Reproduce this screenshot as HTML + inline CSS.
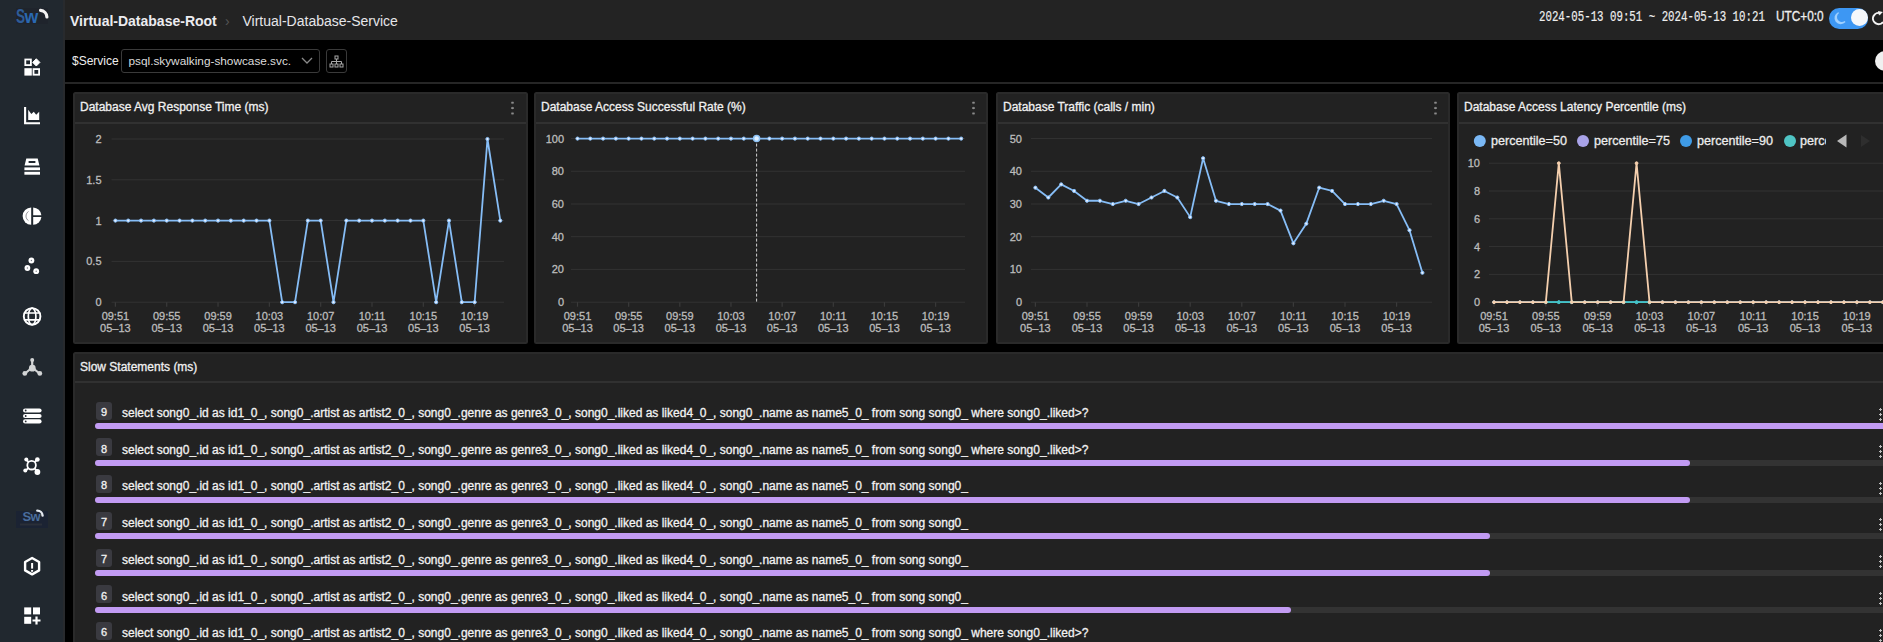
<!DOCTYPE html>
<html><head><meta charset="utf-8">
<style>
*{box-sizing:border-box;margin:0;padding:0}
html,body{width:1883px;height:642px;overflow:hidden;background:#000;font-family:"Liberation Sans",sans-serif;color:#e6e6e6}
.st{-webkit-text-stroke:0.3px currentColor}
.a{position:absolute;white-space:pre}
#side{position:absolute;left:0;top:0;width:65px;height:642px;background:#21282f;border-right:2px solid #282a2d}
#top{position:absolute;left:65px;top:0;width:1818px;height:40px;background:#232323}
#flt{position:absolute;left:65px;top:40px;width:1818px;height:42px;background:#000}
#fline{position:absolute;left:65px;top:82px;width:1818px;height:1.5px;background:#262626}
.panel{position:absolute;background:#222;border:2px solid #2a2a2a;border-radius:2.5px}
.ptitle{position:absolute;left:5px;top:-1px;height:30px;line-height:28px;font-size:12px;color:#f0f0f0;white-space:pre}
.phl{position:absolute;left:0;right:0;top:28px;height:1.6px;background:#313131}
svg.page{position:absolute;left:0;top:0}
svg text{font-family:"Liberation Sans",sans-serif}
.badge{position:absolute;left:96px;width:16px;height:18px;background:#3a3a40;border-radius:3px}
.bnum{position:absolute;left:96px;width:16px;font-size:11px;line-height:13px;text-align:center;color:#f2f2f2;-webkit-text-stroke:0.3px #f2f2f2}
.sq{position:absolute;left:122px;font-size:12px;line-height:14px;color:#f2f2f2;white-space:pre;-webkit-text-stroke:0.3px currentColor}
.trk{position:absolute;left:95px;width:1800px;height:6px;background:#333;border-radius:3px}
.bar{position:absolute;left:95px;height:6px;background:#c29bf3;border-radius:3px}
.kebab{position:absolute;left:1879px;width:3px;height:14px;background:radial-gradient(circle,#bbb 1px,transparent 1.3px) 0 0/3px 5px repeat-y}
.ic{position:absolute;left:0;width:65px}
.kb2{position:absolute;top:100px;width:3px;height:16px;background:radial-gradient(circle,#8c8c8c 1px,transparent 1.4px) 0 0/3px 5.4px repeat-y}
</style></head><body>
<div id="side"></div>
<div id="top"></div>
<div id="flt"></div>
<div id="fline"></div>

<svg class="page" width="65" height="642" viewBox="0 0 65 642" style="position:absolute;left:0;top:0">
<g fill="none" stroke="#fff">
 <!-- logo -->
</g>
<!-- logo top -->
<rect x="16" y="8" width="32" height="16" fill="#1f242c"/>
<text x="0" y="23.3" font-size="20.5" font-weight="bold" fill="#2e5c98" font-family="Liberation Sans" transform="translate(16 0) scale(0.66 1)">S</text>
<text x="0" y="23.3" font-size="19" font-weight="bold" fill="#2a69b2" font-family="Liberation Sans" transform="translate(24.6 0) scale(0.93 1)">w</text>
<path d="M40.6 10.4 A6.8 6.8 0 0 1 46.9 17" stroke="#f4f4f4" stroke-width="3.2" fill="none" stroke-linecap="round"/>
<!-- icon1 grid -->
<rect x="25.3" y="59.5" width="5.6" height="5.6" fill="none" stroke="#fff" stroke-width="1.8"/>
<path d="M36.3 58.8 L39.9 62.4 L36.3 66 L32.7 62.4 Z" fill="#fff" stroke="#fff" stroke-width="1" stroke-linejoin="round"/>
<rect x="24.4" y="68.2" width="7.4" height="7.4" fill="#fff"/>
<rect x="33.5" y="69.1" width="5.6" height="5.6" fill="none" stroke="#fff" stroke-width="1.8"/>
<!-- icon2 area chart -->
<path d="M25.1 107 V123.2 H40" fill="none" stroke="#fff" stroke-width="2.1"/>
<path d="M28.2 109.8 L31.3 114 L33.8 111.8 L36.2 114.8 L39.2 111.8 V120 H28.2 Z" fill="#fff"/>
<!-- icon3 database -->
<path d="M26.3 158.4 H37.7 L39.4 165.6 H24.6 Z M28.6 161 H35.4 V163 H28.6 Z" fill="#fff" fill-rule="evenodd"/>
<rect x="24.4" y="167.4" width="15.6" height="2.8" fill="#fff"/>
<rect x="24.4" y="171.8" width="15.6" height="2.9" fill="#fff"/>
<!-- icon4 pie -->
<path d="M31.2 207.5 A8.6 8.6 0 0 0 31.2 224.7 Z" fill="#fff"/>
<path d="M33.2 207.5 A8.6 8.6 0 0 1 41.4 215.3 H33.2 Z" fill="#fff"/>
<path d="M33.2 217 H41.4 A8.6 8.6 0 0 1 33.2 224.7 Z" fill="#fff"/>
<path d="M28.5 211.5 A5.5 5.5 0 0 0 28.5 220.7" stroke="#252a33" stroke-width="1" fill="none" opacity="0.5"/>
<!-- icon5 dots -->
<circle cx="31.4" cy="260.5" r="2.9" fill="#fff"/><circle cx="31.4" cy="260.5" r="0.7" fill="#7a7f88"/>
<circle cx="27.4" cy="268" r="2.9" fill="#fff"/><circle cx="27.4" cy="268" r="0.7" fill="#7a7f88"/>
<circle cx="36.2" cy="271.2" r="2.9" fill="#fff"/><circle cx="36.2" cy="271.2" r="0.7" fill="#7a7f88"/>
<!-- icon6 globe -->
<circle cx="32.1" cy="316.4" r="8.3" fill="none" stroke="#fff" stroke-width="1.9"/>
<ellipse cx="32.1" cy="316.4" rx="3.8" ry="8.3" fill="none" stroke="#fff" stroke-width="1.7"/>
<path d="M24 313 H40.2 M24 319.8 H40.2" stroke="#fff" stroke-width="1.7"/>
<!-- icon7 tri node -->
<g opacity="0.8">
<path d="M32.2 360 V367.5 M32.2 367.5 L25 373.5 M32.2 367.5 L39.5 373.5" stroke="#fff" stroke-width="2.2" fill="none"/>
<circle cx="32.2" cy="360" r="2" fill="#fff"/>
<circle cx="32.3" cy="368.2" r="3.4" fill="#fff"/>
<circle cx="24.8" cy="373.4" r="2.4" fill="#fff"/>
<circle cx="39.8" cy="373.4" r="2.4" fill="#fff"/>
</g>
<!-- icon8 list -->
<rect x="23" y="408.4" width="18.6" height="4.2" rx="2.1" fill="#fff"/>
<rect x="23" y="413.9" width="18.6" height="4.2" rx="2.1" fill="#fff"/>
<rect x="23" y="419.3" width="18.6" height="4.2" rx="2.1" fill="#fff"/>
<circle cx="25.7" cy="410.5" r="0.9" fill="#252a33"/><circle cx="25.7" cy="416" r="0.9" fill="#252a33"/><circle cx="25.7" cy="421.4" r="0.9" fill="#252a33"/>
<!-- icon9 network -->
<circle cx="31.6" cy="465.2" r="4.3" fill="none" stroke="#fff" stroke-width="1.8"/>
<path d="M26.3 459.7 L28.6 462.2 M37.2 459.5 L34.7 462.2 M25.6 470.6 L28.4 468 M37.3 471.5 L34.6 468.3" stroke="#fff" stroke-width="1.9"/>
<circle cx="26.3" cy="459.6" r="2" fill="#fff"/>
<circle cx="37.4" cy="459.5" r="2.3" fill="#fff"/>
<circle cx="25.3" cy="470.6" r="2" fill="#fff"/>
<circle cx="37.4" cy="472" r="2.9" fill="#fff"/>
<!-- icon10 sw -->
<rect x="16" y="511" width="32" height="17" fill="#1b2333"/>
<text x="22.5" y="521" font-size="13" font-weight="bold" fill="#4a6d9c" font-family="Liberation Sans" letter-spacing="-0.6">Sw</text>
<path d="M37.3 510.6 A5.2 5.2 0 0 1 42.6 515.6" stroke="#e4e9ef" stroke-width="2.4" fill="none" stroke-linecap="round"/>
<rect x="20" y="523.5" width="22" height="2" fill="#2a2f38"/>
<!-- icon11 hexagon -->
<path d="M32.1 558 L39.1 562 V570.4 L32.1 574.4 L25.1 570.4 V562 Z" fill="none" stroke="#fff" stroke-width="2.4" stroke-linejoin="round"/>
<rect x="31.1" y="563" width="2" height="5.6" fill="#fff"/>
<rect x="31.1" y="570" width="2" height="1.8" fill="#fff"/>
<!-- icon12 grid plus -->
<rect x="24.2" y="607.4" width="7" height="7" fill="#fff"/>
<rect x="33" y="607.4" width="7" height="7" fill="#fff"/>
<rect x="24.2" y="616.8" width="7" height="7" fill="#fff"/>
<path d="M36.5 616.5 V624.5 M32.5 620.5 H40.5" stroke="#fff" stroke-width="2.2"/>
</svg>


<!-- header -->
<div class="a" style="left:70px;top:13px;font-size:14px;font-weight:bold;color:#ececf0;line-height:16px">Virtual-Database-Root</div>
<div class="a" style="left:225px;top:13px;font-size:14px;color:#555;line-height:16px">&#8250;</div>
<div class="a" style="left:242.5px;top:13px;font-size:14px;color:#e6e6ea;line-height:16px">Virtual-Database-Service</div>

<!-- time -->
<div class="a" style="left:1539px;top:8.5px;font-family:'Liberation Mono',monospace;font-size:15px;line-height:17px;-webkit-text-stroke:0.2px #eee;color:#eee;transform:scaleX(0.717);transform-origin:0 0">2024-05-13 09:51 ~ 2024-05-13 10:21</div>
<div class="a" style="left:1776px;top:8px;font-size:14px;line-height:16px;color:#eee;-webkit-text-stroke:0.3px #eee;transform:scaleX(0.845);transform-origin:0 0">UTC+0:0</div>
<div class="a" style="left:1829px;top:8px;width:39px;height:20.5px;border-radius:10.25px;background:#3d97f3"></div>
<div class="a" style="left:1851px;top:9.4px;width:17px;height:17px;border-radius:8.5px;background:#f6f8fb"></div>
<svg class="page" width="1883" height="40" style="position:absolute;left:0;top:0">
<path d="M1838.5 12.8 A5.6 5.6 0 1 0 1845 21.6 A4.6 4.6 0 0 1 1838.5 12.8 Z" fill="none" stroke="#9fd0ff" stroke-width="1.4"/>
<path d="M1881 13.5 A5.6 5.6 0 1 0 1883 22" fill="none" stroke="#f4f4f4" stroke-width="2"/>
<path d="M1878 11 L1883 12 L1879 15.5 Z" fill="#f4f4f4"/>
</svg>

<!-- filter -->
<div class="a" style="left:72px;top:53px;font-size:12px;color:#eee;line-height:16px">$Service</div>
<div class="a" style="left:121px;top:49px;width:199px;height:24px;border:1px solid #3a3a3a;border-radius:3px"></div>
<div class="a" style="left:128.5px;top:53px;font-size:11.8px;color:#ddd;line-height:16px">psql.skywalking-showcase.svc.</div>
<div class="a" style="left:326px;top:49px;width:21px;height:24px;border:1px solid #3a3a3a;border-radius:3px"></div>
<svg class="page" width="400" height="90" style="position:absolute;left:0;top:0">
<path d="M302 58 L307 63 L312 58" fill="none" stroke="#8a8a8a" stroke-width="1.3"/>
<g fill="none" stroke="#a8a8a8" stroke-width="1">
<rect x="335" y="56" width="3" height="3"/>
<path d="M336.5 59 V61.5 M331.5 64 V61.5 H341.5 V64 M336.5 61.5 V64"/>
<rect x="330" y="64" width="3" height="3"/><rect x="335" y="64" width="3" height="3"/><rect x="340" y="64" width="3" height="3"/>
</g>
</svg>
<div class="a" style="left:1875px;top:51px;width:20px;height:20px;border-radius:10px;background:#f0f0f0"></div>

<!-- panels -->
<div class="panel" style="left:73px;top:92px;width:455px;height:252px"><div class="ptitle st">Database Avg Response Time (ms)</div><div class="phl"></div></div>
<div class="panel" style="left:534px;top:92px;width:454px;height:252px"><div class="ptitle st">Database Access Successful Rate (%)</div><div class="phl"></div></div>
<div class="panel" style="left:996px;top:92px;width:454px;height:252px"><div class="ptitle st">Database Traffic (calls / min)</div><div class="phl"></div></div>
<div class="panel" style="left:1457px;top:92px;width:440px;height:252px"><div class="ptitle st">Database Access Latency Percentile (ms)</div><div class="phl"></div></div>
<div class="panel" style="left:73px;top:352px;width:1830px;height:300px"><div class="ptitle st">Slow Statements (ms)</div><div class="phl" style="top:27px"></div></div>

<svg class="page" width="1883" height="642" viewBox="0 0 1883 642">
<line x1="111.5" y1="139" x2="504" y2="139" stroke="#333" stroke-width="1"/>
<line x1="111.5" y1="179.8" x2="504" y2="179.8" stroke="#333" stroke-width="1"/>
<line x1="111.5" y1="220.6" x2="504" y2="220.6" stroke="#333" stroke-width="1"/>
<line x1="111.5" y1="261.4" x2="504" y2="261.4" stroke="#333" stroke-width="1"/>
<line x1="111.5" y1="302.2" x2="504" y2="302.2" stroke="#333" stroke-width="1"/>
<text x="101.5" y="142.9" font-size="11" fill="#bcbcbc" stroke="#bcbcbc" stroke-width="0.3" text-anchor="end" font-weight="normal" >2</text>
<text x="101.5" y="183.7" font-size="11" fill="#bcbcbc" stroke="#bcbcbc" stroke-width="0.3" text-anchor="end" font-weight="normal" >1.5</text>
<text x="101.5" y="224.5" font-size="11" fill="#bcbcbc" stroke="#bcbcbc" stroke-width="0.3" text-anchor="end" font-weight="normal" >1</text>
<text x="101.5" y="265.3" font-size="11" fill="#bcbcbc" stroke="#bcbcbc" stroke-width="0.3" text-anchor="end" font-weight="normal" >0.5</text>
<text x="101.5" y="306.1" font-size="11" fill="#bcbcbc" stroke="#bcbcbc" stroke-width="0.3" text-anchor="end" font-weight="normal" >0</text>
<line x1="115.4" y1="302.2" x2="115.4" y2="306.7" stroke="#3a3a3a" stroke-width="1.2"/>
<text x="115.4" y="320.4" font-size="11" fill="#bcbcbc" stroke="#bcbcbc" stroke-width="0.3" text-anchor="middle" font-weight="normal" >09:51</text>
<text x="115.4" y="331.7" font-size="11" fill="#bcbcbc" stroke="#bcbcbc" stroke-width="0.3" text-anchor="middle" font-weight="normal" >05–13</text>
<line x1="166.72" y1="302.2" x2="166.72" y2="306.7" stroke="#3a3a3a" stroke-width="1.2"/>
<text x="166.72" y="320.4" font-size="11" fill="#bcbcbc" stroke="#bcbcbc" stroke-width="0.3" text-anchor="middle" font-weight="normal" >09:55</text>
<text x="166.72" y="331.7" font-size="11" fill="#bcbcbc" stroke="#bcbcbc" stroke-width="0.3" text-anchor="middle" font-weight="normal" >05–13</text>
<line x1="218.04" y1="302.2" x2="218.04" y2="306.7" stroke="#3a3a3a" stroke-width="1.2"/>
<text x="218.04" y="320.4" font-size="11" fill="#bcbcbc" stroke="#bcbcbc" stroke-width="0.3" text-anchor="middle" font-weight="normal" >09:59</text>
<text x="218.04" y="331.7" font-size="11" fill="#bcbcbc" stroke="#bcbcbc" stroke-width="0.3" text-anchor="middle" font-weight="normal" >05–13</text>
<line x1="269.36" y1="302.2" x2="269.36" y2="306.7" stroke="#3a3a3a" stroke-width="1.2"/>
<text x="269.36" y="320.4" font-size="11" fill="#bcbcbc" stroke="#bcbcbc" stroke-width="0.3" text-anchor="middle" font-weight="normal" >10:03</text>
<text x="269.36" y="331.7" font-size="11" fill="#bcbcbc" stroke="#bcbcbc" stroke-width="0.3" text-anchor="middle" font-weight="normal" >05–13</text>
<line x1="320.68" y1="302.2" x2="320.68" y2="306.7" stroke="#3a3a3a" stroke-width="1.2"/>
<text x="320.68" y="320.4" font-size="11" fill="#bcbcbc" stroke="#bcbcbc" stroke-width="0.3" text-anchor="middle" font-weight="normal" >10:07</text>
<text x="320.68" y="331.7" font-size="11" fill="#bcbcbc" stroke="#bcbcbc" stroke-width="0.3" text-anchor="middle" font-weight="normal" >05–13</text>
<line x1="372" y1="302.2" x2="372" y2="306.7" stroke="#3a3a3a" stroke-width="1.2"/>
<text x="372" y="320.4" font-size="11" fill="#bcbcbc" stroke="#bcbcbc" stroke-width="0.3" text-anchor="middle" font-weight="normal" >10:11</text>
<text x="372" y="331.7" font-size="11" fill="#bcbcbc" stroke="#bcbcbc" stroke-width="0.3" text-anchor="middle" font-weight="normal" >05–13</text>
<line x1="423.32" y1="302.2" x2="423.32" y2="306.7" stroke="#3a3a3a" stroke-width="1.2"/>
<text x="423.32" y="320.4" font-size="11" fill="#bcbcbc" stroke="#bcbcbc" stroke-width="0.3" text-anchor="middle" font-weight="normal" >10:15</text>
<text x="423.32" y="331.7" font-size="11" fill="#bcbcbc" stroke="#bcbcbc" stroke-width="0.3" text-anchor="middle" font-weight="normal" >05–13</text>
<line x1="474.64" y1="302.2" x2="474.64" y2="306.7" stroke="#3a3a3a" stroke-width="1.2"/>
<text x="474.64" y="320.4" font-size="11" fill="#bcbcbc" stroke="#bcbcbc" stroke-width="0.3" text-anchor="middle" font-weight="normal" >10:19</text>
<text x="474.64" y="331.7" font-size="11" fill="#bcbcbc" stroke="#bcbcbc" stroke-width="0.3" text-anchor="middle" font-weight="normal" >05–13</text>
<polyline points="115.4,220.6 128.23,220.6 141.06,220.6 153.89,220.6 166.72,220.6 179.55,220.6 192.38,220.6 205.21,220.6 218.04,220.6 230.87,220.6 243.7,220.6 256.53,220.6 269.36,220.6 282.19,302.2 295.02,302.2 307.85,220.6 320.68,220.6 333.51,302.2 346.34,220.6 359.17,220.6 372,220.6 384.83,220.6 397.66,220.6 410.49,220.6 423.32,220.6 436.15,302.2 448.98,220.6 461.81,302.2 474.64,302.2 487.47,139 500.3,220.6" fill="none" stroke="#86bdf6" stroke-width="1.8" stroke-linejoin="round"/>
<circle cx="115.4" cy="220.6" r="1.6" fill="#e8f0ff" stroke="#86bdf6" stroke-width="1"/>
<circle cx="128.23" cy="220.6" r="1.6" fill="#e8f0ff" stroke="#86bdf6" stroke-width="1"/>
<circle cx="141.06" cy="220.6" r="1.6" fill="#e8f0ff" stroke="#86bdf6" stroke-width="1"/>
<circle cx="153.89" cy="220.6" r="1.6" fill="#e8f0ff" stroke="#86bdf6" stroke-width="1"/>
<circle cx="166.72" cy="220.6" r="1.6" fill="#e8f0ff" stroke="#86bdf6" stroke-width="1"/>
<circle cx="179.55" cy="220.6" r="1.6" fill="#e8f0ff" stroke="#86bdf6" stroke-width="1"/>
<circle cx="192.38" cy="220.6" r="1.6" fill="#e8f0ff" stroke="#86bdf6" stroke-width="1"/>
<circle cx="205.21" cy="220.6" r="1.6" fill="#e8f0ff" stroke="#86bdf6" stroke-width="1"/>
<circle cx="218.04" cy="220.6" r="1.6" fill="#e8f0ff" stroke="#86bdf6" stroke-width="1"/>
<circle cx="230.87" cy="220.6" r="1.6" fill="#e8f0ff" stroke="#86bdf6" stroke-width="1"/>
<circle cx="243.7" cy="220.6" r="1.6" fill="#e8f0ff" stroke="#86bdf6" stroke-width="1"/>
<circle cx="256.53" cy="220.6" r="1.6" fill="#e8f0ff" stroke="#86bdf6" stroke-width="1"/>
<circle cx="269.36" cy="220.6" r="1.6" fill="#e8f0ff" stroke="#86bdf6" stroke-width="1"/>
<circle cx="282.19" cy="302.2" r="1.6" fill="#e8f0ff" stroke="#86bdf6" stroke-width="1"/>
<circle cx="295.02" cy="302.2" r="1.6" fill="#e8f0ff" stroke="#86bdf6" stroke-width="1"/>
<circle cx="307.85" cy="220.6" r="1.6" fill="#e8f0ff" stroke="#86bdf6" stroke-width="1"/>
<circle cx="320.68" cy="220.6" r="1.6" fill="#e8f0ff" stroke="#86bdf6" stroke-width="1"/>
<circle cx="333.51" cy="302.2" r="1.6" fill="#e8f0ff" stroke="#86bdf6" stroke-width="1"/>
<circle cx="346.34" cy="220.6" r="1.6" fill="#e8f0ff" stroke="#86bdf6" stroke-width="1"/>
<circle cx="359.17" cy="220.6" r="1.6" fill="#e8f0ff" stroke="#86bdf6" stroke-width="1"/>
<circle cx="372" cy="220.6" r="1.6" fill="#e8f0ff" stroke="#86bdf6" stroke-width="1"/>
<circle cx="384.83" cy="220.6" r="1.6" fill="#e8f0ff" stroke="#86bdf6" stroke-width="1"/>
<circle cx="397.66" cy="220.6" r="1.6" fill="#e8f0ff" stroke="#86bdf6" stroke-width="1"/>
<circle cx="410.49" cy="220.6" r="1.6" fill="#e8f0ff" stroke="#86bdf6" stroke-width="1"/>
<circle cx="423.32" cy="220.6" r="1.6" fill="#e8f0ff" stroke="#86bdf6" stroke-width="1"/>
<circle cx="436.15" cy="302.2" r="1.6" fill="#e8f0ff" stroke="#86bdf6" stroke-width="1"/>
<circle cx="448.98" cy="220.6" r="1.6" fill="#e8f0ff" stroke="#86bdf6" stroke-width="1"/>
<circle cx="461.81" cy="302.2" r="1.6" fill="#e8f0ff" stroke="#86bdf6" stroke-width="1"/>
<circle cx="474.64" cy="302.2" r="1.6" fill="#e8f0ff" stroke="#86bdf6" stroke-width="1"/>
<circle cx="487.47" cy="139" r="1.6" fill="#e8f0ff" stroke="#86bdf6" stroke-width="1"/>
<circle cx="500.3" cy="220.6" r="1.6" fill="#e8f0ff" stroke="#86bdf6" stroke-width="1"/>
<line x1="571" y1="138.6" x2="965" y2="138.6" stroke="#333" stroke-width="1"/>
<line x1="571" y1="171.3" x2="965" y2="171.3" stroke="#333" stroke-width="1"/>
<line x1="571" y1="204" x2="965" y2="204" stroke="#333" stroke-width="1"/>
<line x1="571" y1="236.7" x2="965" y2="236.7" stroke="#333" stroke-width="1"/>
<line x1="571" y1="269.4" x2="965" y2="269.4" stroke="#333" stroke-width="1"/>
<line x1="571" y1="302.2" x2="965" y2="302.2" stroke="#333" stroke-width="1"/>
<text x="564" y="142.5" font-size="11" fill="#bcbcbc" stroke="#bcbcbc" stroke-width="0.3" text-anchor="end" font-weight="normal" >100</text>
<text x="564" y="175.2" font-size="11" fill="#bcbcbc" stroke="#bcbcbc" stroke-width="0.3" text-anchor="end" font-weight="normal" >80</text>
<text x="564" y="207.9" font-size="11" fill="#bcbcbc" stroke="#bcbcbc" stroke-width="0.3" text-anchor="end" font-weight="normal" >60</text>
<text x="564" y="240.6" font-size="11" fill="#bcbcbc" stroke="#bcbcbc" stroke-width="0.3" text-anchor="end" font-weight="normal" >40</text>
<text x="564" y="273.3" font-size="11" fill="#bcbcbc" stroke="#bcbcbc" stroke-width="0.3" text-anchor="end" font-weight="normal" >20</text>
<text x="564" y="306.1" font-size="11" fill="#bcbcbc" stroke="#bcbcbc" stroke-width="0.3" text-anchor="end" font-weight="normal" >0</text>
<line x1="577.5" y1="302.2" x2="577.5" y2="306.7" stroke="#3a3a3a" stroke-width="1.2"/>
<text x="577.5" y="320.4" font-size="11" fill="#bcbcbc" stroke="#bcbcbc" stroke-width="0.3" text-anchor="middle" font-weight="normal" >09:51</text>
<text x="577.5" y="331.7" font-size="11" fill="#bcbcbc" stroke="#bcbcbc" stroke-width="0.3" text-anchor="middle" font-weight="normal" >05–13</text>
<line x1="628.66" y1="302.2" x2="628.66" y2="306.7" stroke="#3a3a3a" stroke-width="1.2"/>
<text x="628.66" y="320.4" font-size="11" fill="#bcbcbc" stroke="#bcbcbc" stroke-width="0.3" text-anchor="middle" font-weight="normal" >09:55</text>
<text x="628.66" y="331.7" font-size="11" fill="#bcbcbc" stroke="#bcbcbc" stroke-width="0.3" text-anchor="middle" font-weight="normal" >05–13</text>
<line x1="679.82" y1="302.2" x2="679.82" y2="306.7" stroke="#3a3a3a" stroke-width="1.2"/>
<text x="679.82" y="320.4" font-size="11" fill="#bcbcbc" stroke="#bcbcbc" stroke-width="0.3" text-anchor="middle" font-weight="normal" >09:59</text>
<text x="679.82" y="331.7" font-size="11" fill="#bcbcbc" stroke="#bcbcbc" stroke-width="0.3" text-anchor="middle" font-weight="normal" >05–13</text>
<line x1="730.98" y1="302.2" x2="730.98" y2="306.7" stroke="#3a3a3a" stroke-width="1.2"/>
<text x="730.98" y="320.4" font-size="11" fill="#bcbcbc" stroke="#bcbcbc" stroke-width="0.3" text-anchor="middle" font-weight="normal" >10:03</text>
<text x="730.98" y="331.7" font-size="11" fill="#bcbcbc" stroke="#bcbcbc" stroke-width="0.3" text-anchor="middle" font-weight="normal" >05–13</text>
<line x1="782.14" y1="302.2" x2="782.14" y2="306.7" stroke="#3a3a3a" stroke-width="1.2"/>
<text x="782.14" y="320.4" font-size="11" fill="#bcbcbc" stroke="#bcbcbc" stroke-width="0.3" text-anchor="middle" font-weight="normal" >10:07</text>
<text x="782.14" y="331.7" font-size="11" fill="#bcbcbc" stroke="#bcbcbc" stroke-width="0.3" text-anchor="middle" font-weight="normal" >05–13</text>
<line x1="833.3" y1="302.2" x2="833.3" y2="306.7" stroke="#3a3a3a" stroke-width="1.2"/>
<text x="833.3" y="320.4" font-size="11" fill="#bcbcbc" stroke="#bcbcbc" stroke-width="0.3" text-anchor="middle" font-weight="normal" >10:11</text>
<text x="833.3" y="331.7" font-size="11" fill="#bcbcbc" stroke="#bcbcbc" stroke-width="0.3" text-anchor="middle" font-weight="normal" >05–13</text>
<line x1="884.46" y1="302.2" x2="884.46" y2="306.7" stroke="#3a3a3a" stroke-width="1.2"/>
<text x="884.46" y="320.4" font-size="11" fill="#bcbcbc" stroke="#bcbcbc" stroke-width="0.3" text-anchor="middle" font-weight="normal" >10:15</text>
<text x="884.46" y="331.7" font-size="11" fill="#bcbcbc" stroke="#bcbcbc" stroke-width="0.3" text-anchor="middle" font-weight="normal" >05–13</text>
<line x1="935.62" y1="302.2" x2="935.62" y2="306.7" stroke="#3a3a3a" stroke-width="1.2"/>
<text x="935.62" y="320.4" font-size="11" fill="#bcbcbc" stroke="#bcbcbc" stroke-width="0.3" text-anchor="middle" font-weight="normal" >10:19</text>
<text x="935.62" y="331.7" font-size="11" fill="#bcbcbc" stroke="#bcbcbc" stroke-width="0.3" text-anchor="middle" font-weight="normal" >05–13</text>
<polyline points="577.5,138.6 590.29,138.6 603.08,138.6 615.87,138.6 628.66,138.6 641.45,138.6 654.24,138.6 667.03,138.6 679.82,138.6 692.61,138.6 705.4,138.6 718.19,138.6 730.98,138.6 743.77,138.6 756.56,138.6 769.35,138.6 782.14,138.6 794.93,138.6 807.72,138.6 820.51,138.6 833.3,138.6 846.09,138.6 858.88,138.6 871.67,138.6 884.46,138.6 897.25,138.6 910.04,138.6 922.83,138.6 935.62,138.6 948.41,138.6 961.2,138.6" fill="none" stroke="#86bdf6" stroke-width="1.8" stroke-linejoin="round"/>
<circle cx="577.5" cy="138.6" r="1.6" fill="#e8f0ff" stroke="#86bdf6" stroke-width="1"/>
<circle cx="590.29" cy="138.6" r="1.6" fill="#e8f0ff" stroke="#86bdf6" stroke-width="1"/>
<circle cx="603.08" cy="138.6" r="1.6" fill="#e8f0ff" stroke="#86bdf6" stroke-width="1"/>
<circle cx="615.87" cy="138.6" r="1.6" fill="#e8f0ff" stroke="#86bdf6" stroke-width="1"/>
<circle cx="628.66" cy="138.6" r="1.6" fill="#e8f0ff" stroke="#86bdf6" stroke-width="1"/>
<circle cx="641.45" cy="138.6" r="1.6" fill="#e8f0ff" stroke="#86bdf6" stroke-width="1"/>
<circle cx="654.24" cy="138.6" r="1.6" fill="#e8f0ff" stroke="#86bdf6" stroke-width="1"/>
<circle cx="667.03" cy="138.6" r="1.6" fill="#e8f0ff" stroke="#86bdf6" stroke-width="1"/>
<circle cx="679.82" cy="138.6" r="1.6" fill="#e8f0ff" stroke="#86bdf6" stroke-width="1"/>
<circle cx="692.61" cy="138.6" r="1.6" fill="#e8f0ff" stroke="#86bdf6" stroke-width="1"/>
<circle cx="705.4" cy="138.6" r="1.6" fill="#e8f0ff" stroke="#86bdf6" stroke-width="1"/>
<circle cx="718.19" cy="138.6" r="1.6" fill="#e8f0ff" stroke="#86bdf6" stroke-width="1"/>
<circle cx="730.98" cy="138.6" r="1.6" fill="#e8f0ff" stroke="#86bdf6" stroke-width="1"/>
<circle cx="743.77" cy="138.6" r="1.6" fill="#e8f0ff" stroke="#86bdf6" stroke-width="1"/>
<circle cx="756.56" cy="138.6" r="1.6" fill="#e8f0ff" stroke="#86bdf6" stroke-width="1"/>
<circle cx="769.35" cy="138.6" r="1.6" fill="#e8f0ff" stroke="#86bdf6" stroke-width="1"/>
<circle cx="782.14" cy="138.6" r="1.6" fill="#e8f0ff" stroke="#86bdf6" stroke-width="1"/>
<circle cx="794.93" cy="138.6" r="1.6" fill="#e8f0ff" stroke="#86bdf6" stroke-width="1"/>
<circle cx="807.72" cy="138.6" r="1.6" fill="#e8f0ff" stroke="#86bdf6" stroke-width="1"/>
<circle cx="820.51" cy="138.6" r="1.6" fill="#e8f0ff" stroke="#86bdf6" stroke-width="1"/>
<circle cx="833.3" cy="138.6" r="1.6" fill="#e8f0ff" stroke="#86bdf6" stroke-width="1"/>
<circle cx="846.09" cy="138.6" r="1.6" fill="#e8f0ff" stroke="#86bdf6" stroke-width="1"/>
<circle cx="858.88" cy="138.6" r="1.6" fill="#e8f0ff" stroke="#86bdf6" stroke-width="1"/>
<circle cx="871.67" cy="138.6" r="1.6" fill="#e8f0ff" stroke="#86bdf6" stroke-width="1"/>
<circle cx="884.46" cy="138.6" r="1.6" fill="#e8f0ff" stroke="#86bdf6" stroke-width="1"/>
<circle cx="897.25" cy="138.6" r="1.6" fill="#e8f0ff" stroke="#86bdf6" stroke-width="1"/>
<circle cx="910.04" cy="138.6" r="1.6" fill="#e8f0ff" stroke="#86bdf6" stroke-width="1"/>
<circle cx="922.83" cy="138.6" r="1.6" fill="#e8f0ff" stroke="#86bdf6" stroke-width="1"/>
<circle cx="935.62" cy="138.6" r="1.6" fill="#e8f0ff" stroke="#86bdf6" stroke-width="1"/>
<circle cx="948.41" cy="138.6" r="1.6" fill="#e8f0ff" stroke="#86bdf6" stroke-width="1"/>
<circle cx="961.2" cy="138.6" r="1.6" fill="#e8f0ff" stroke="#86bdf6" stroke-width="1"/>
<line x1="756.6" y1="138.6" x2="756.6" y2="302.2" stroke="#cfcfcf" stroke-width="1" stroke-dasharray="3,2"/>
<circle cx="756.6" cy="138.6" r="3" fill="#dfefff" stroke="#8ec3f5" stroke-width="1.5"/>
<line x1="1031" y1="138.6" x2="1432" y2="138.6" stroke="#333" stroke-width="1"/>
<line x1="1031" y1="171.3" x2="1432" y2="171.3" stroke="#333" stroke-width="1"/>
<line x1="1031" y1="204" x2="1432" y2="204" stroke="#333" stroke-width="1"/>
<line x1="1031" y1="236.7" x2="1432" y2="236.7" stroke="#333" stroke-width="1"/>
<line x1="1031" y1="269.4" x2="1432" y2="269.4" stroke="#333" stroke-width="1"/>
<line x1="1031" y1="302.2" x2="1432" y2="302.2" stroke="#333" stroke-width="1"/>
<text x="1022" y="142.5" font-size="11" fill="#bcbcbc" stroke="#bcbcbc" stroke-width="0.3" text-anchor="end" font-weight="normal" >50</text>
<text x="1022" y="175.2" font-size="11" fill="#bcbcbc" stroke="#bcbcbc" stroke-width="0.3" text-anchor="end" font-weight="normal" >40</text>
<text x="1022" y="207.9" font-size="11" fill="#bcbcbc" stroke="#bcbcbc" stroke-width="0.3" text-anchor="end" font-weight="normal" >30</text>
<text x="1022" y="240.6" font-size="11" fill="#bcbcbc" stroke="#bcbcbc" stroke-width="0.3" text-anchor="end" font-weight="normal" >20</text>
<text x="1022" y="273.3" font-size="11" fill="#bcbcbc" stroke="#bcbcbc" stroke-width="0.3" text-anchor="end" font-weight="normal" >10</text>
<text x="1022" y="306.1" font-size="11" fill="#bcbcbc" stroke="#bcbcbc" stroke-width="0.3" text-anchor="end" font-weight="normal" >0</text>
<line x1="1035.4" y1="302.2" x2="1035.4" y2="306.7" stroke="#3a3a3a" stroke-width="1.2"/>
<text x="1035.4" y="320.4" font-size="11" fill="#bcbcbc" stroke="#bcbcbc" stroke-width="0.3" text-anchor="middle" font-weight="normal" >09:51</text>
<text x="1035.4" y="331.7" font-size="11" fill="#bcbcbc" stroke="#bcbcbc" stroke-width="0.3" text-anchor="middle" font-weight="normal" >05–13</text>
<line x1="1087" y1="302.2" x2="1087" y2="306.7" stroke="#3a3a3a" stroke-width="1.2"/>
<text x="1087" y="320.4" font-size="11" fill="#bcbcbc" stroke="#bcbcbc" stroke-width="0.3" text-anchor="middle" font-weight="normal" >09:55</text>
<text x="1087" y="331.7" font-size="11" fill="#bcbcbc" stroke="#bcbcbc" stroke-width="0.3" text-anchor="middle" font-weight="normal" >05–13</text>
<line x1="1138.6" y1="302.2" x2="1138.6" y2="306.7" stroke="#3a3a3a" stroke-width="1.2"/>
<text x="1138.6" y="320.4" font-size="11" fill="#bcbcbc" stroke="#bcbcbc" stroke-width="0.3" text-anchor="middle" font-weight="normal" >09:59</text>
<text x="1138.6" y="331.7" font-size="11" fill="#bcbcbc" stroke="#bcbcbc" stroke-width="0.3" text-anchor="middle" font-weight="normal" >05–13</text>
<line x1="1190.2" y1="302.2" x2="1190.2" y2="306.7" stroke="#3a3a3a" stroke-width="1.2"/>
<text x="1190.2" y="320.4" font-size="11" fill="#bcbcbc" stroke="#bcbcbc" stroke-width="0.3" text-anchor="middle" font-weight="normal" >10:03</text>
<text x="1190.2" y="331.7" font-size="11" fill="#bcbcbc" stroke="#bcbcbc" stroke-width="0.3" text-anchor="middle" font-weight="normal" >05–13</text>
<line x1="1241.8" y1="302.2" x2="1241.8" y2="306.7" stroke="#3a3a3a" stroke-width="1.2"/>
<text x="1241.8" y="320.4" font-size="11" fill="#bcbcbc" stroke="#bcbcbc" stroke-width="0.3" text-anchor="middle" font-weight="normal" >10:07</text>
<text x="1241.8" y="331.7" font-size="11" fill="#bcbcbc" stroke="#bcbcbc" stroke-width="0.3" text-anchor="middle" font-weight="normal" >05–13</text>
<line x1="1293.4" y1="302.2" x2="1293.4" y2="306.7" stroke="#3a3a3a" stroke-width="1.2"/>
<text x="1293.4" y="320.4" font-size="11" fill="#bcbcbc" stroke="#bcbcbc" stroke-width="0.3" text-anchor="middle" font-weight="normal" >10:11</text>
<text x="1293.4" y="331.7" font-size="11" fill="#bcbcbc" stroke="#bcbcbc" stroke-width="0.3" text-anchor="middle" font-weight="normal" >05–13</text>
<line x1="1345" y1="302.2" x2="1345" y2="306.7" stroke="#3a3a3a" stroke-width="1.2"/>
<text x="1345" y="320.4" font-size="11" fill="#bcbcbc" stroke="#bcbcbc" stroke-width="0.3" text-anchor="middle" font-weight="normal" >10:15</text>
<text x="1345" y="331.7" font-size="11" fill="#bcbcbc" stroke="#bcbcbc" stroke-width="0.3" text-anchor="middle" font-weight="normal" >05–13</text>
<line x1="1396.6" y1="302.2" x2="1396.6" y2="306.7" stroke="#3a3a3a" stroke-width="1.2"/>
<text x="1396.6" y="320.4" font-size="11" fill="#bcbcbc" stroke="#bcbcbc" stroke-width="0.3" text-anchor="middle" font-weight="normal" >10:19</text>
<text x="1396.6" y="331.7" font-size="11" fill="#bcbcbc" stroke="#bcbcbc" stroke-width="0.3" text-anchor="middle" font-weight="normal" >05–13</text>
<polyline points="1035.4,187.68 1048.3,197.5 1061.2,184.41 1074.1,190.95 1087,200.77 1099.9,200.77 1112.8,204.04 1125.7,200.77 1138.6,204.04 1151.5,197.5 1164.4,190.95 1177.3,197.5 1190.2,217.13 1203.1,158.23 1216,200.77 1228.9,204.04 1241.8,204.04 1254.7,204.04 1267.6,204.04 1280.5,210.58 1293.4,243.3 1306.3,223.67 1319.2,187.68 1332.1,190.95 1345,204.04 1357.9,204.04 1370.8,204.04 1383.7,200.77 1396.6,204.04 1409.5,230.22 1422.4,272.75" fill="none" stroke="#86bdf6" stroke-width="1.8" stroke-linejoin="round"/>
<circle cx="1035.4" cy="187.68" r="1.6" fill="#e8f0ff" stroke="#86bdf6" stroke-width="1"/>
<circle cx="1048.3" cy="197.5" r="1.6" fill="#e8f0ff" stroke="#86bdf6" stroke-width="1"/>
<circle cx="1061.2" cy="184.41" r="1.6" fill="#e8f0ff" stroke="#86bdf6" stroke-width="1"/>
<circle cx="1074.1" cy="190.95" r="1.6" fill="#e8f0ff" stroke="#86bdf6" stroke-width="1"/>
<circle cx="1087" cy="200.77" r="1.6" fill="#e8f0ff" stroke="#86bdf6" stroke-width="1"/>
<circle cx="1099.9" cy="200.77" r="1.6" fill="#e8f0ff" stroke="#86bdf6" stroke-width="1"/>
<circle cx="1112.8" cy="204.04" r="1.6" fill="#e8f0ff" stroke="#86bdf6" stroke-width="1"/>
<circle cx="1125.7" cy="200.77" r="1.6" fill="#e8f0ff" stroke="#86bdf6" stroke-width="1"/>
<circle cx="1138.6" cy="204.04" r="1.6" fill="#e8f0ff" stroke="#86bdf6" stroke-width="1"/>
<circle cx="1151.5" cy="197.5" r="1.6" fill="#e8f0ff" stroke="#86bdf6" stroke-width="1"/>
<circle cx="1164.4" cy="190.95" r="1.6" fill="#e8f0ff" stroke="#86bdf6" stroke-width="1"/>
<circle cx="1177.3" cy="197.5" r="1.6" fill="#e8f0ff" stroke="#86bdf6" stroke-width="1"/>
<circle cx="1190.2" cy="217.13" r="1.6" fill="#e8f0ff" stroke="#86bdf6" stroke-width="1"/>
<circle cx="1203.1" cy="158.23" r="1.6" fill="#e8f0ff" stroke="#86bdf6" stroke-width="1"/>
<circle cx="1216" cy="200.77" r="1.6" fill="#e8f0ff" stroke="#86bdf6" stroke-width="1"/>
<circle cx="1228.9" cy="204.04" r="1.6" fill="#e8f0ff" stroke="#86bdf6" stroke-width="1"/>
<circle cx="1241.8" cy="204.04" r="1.6" fill="#e8f0ff" stroke="#86bdf6" stroke-width="1"/>
<circle cx="1254.7" cy="204.04" r="1.6" fill="#e8f0ff" stroke="#86bdf6" stroke-width="1"/>
<circle cx="1267.6" cy="204.04" r="1.6" fill="#e8f0ff" stroke="#86bdf6" stroke-width="1"/>
<circle cx="1280.5" cy="210.58" r="1.6" fill="#e8f0ff" stroke="#86bdf6" stroke-width="1"/>
<circle cx="1293.4" cy="243.3" r="1.6" fill="#e8f0ff" stroke="#86bdf6" stroke-width="1"/>
<circle cx="1306.3" cy="223.67" r="1.6" fill="#e8f0ff" stroke="#86bdf6" stroke-width="1"/>
<circle cx="1319.2" cy="187.68" r="1.6" fill="#e8f0ff" stroke="#86bdf6" stroke-width="1"/>
<circle cx="1332.1" cy="190.95" r="1.6" fill="#e8f0ff" stroke="#86bdf6" stroke-width="1"/>
<circle cx="1345" cy="204.04" r="1.6" fill="#e8f0ff" stroke="#86bdf6" stroke-width="1"/>
<circle cx="1357.9" cy="204.04" r="1.6" fill="#e8f0ff" stroke="#86bdf6" stroke-width="1"/>
<circle cx="1370.8" cy="204.04" r="1.6" fill="#e8f0ff" stroke="#86bdf6" stroke-width="1"/>
<circle cx="1383.7" cy="200.77" r="1.6" fill="#e8f0ff" stroke="#86bdf6" stroke-width="1"/>
<circle cx="1396.6" cy="204.04" r="1.6" fill="#e8f0ff" stroke="#86bdf6" stroke-width="1"/>
<circle cx="1409.5" cy="230.22" r="1.6" fill="#e8f0ff" stroke="#86bdf6" stroke-width="1"/>
<circle cx="1422.4" cy="272.75" r="1.6" fill="#e8f0ff" stroke="#86bdf6" stroke-width="1"/>
<line x1="1489" y1="163.2" x2="1900" y2="163.2" stroke="#333" stroke-width="1"/>
<line x1="1489" y1="191" x2="1900" y2="191" stroke="#333" stroke-width="1"/>
<line x1="1489" y1="218.8" x2="1900" y2="218.8" stroke="#333" stroke-width="1"/>
<line x1="1489" y1="246.6" x2="1900" y2="246.6" stroke="#333" stroke-width="1"/>
<line x1="1489" y1="274.4" x2="1900" y2="274.4" stroke="#333" stroke-width="1"/>
<line x1="1489" y1="302.2" x2="1900" y2="302.2" stroke="#333" stroke-width="1"/>
<text x="1480" y="167.1" font-size="11" fill="#bcbcbc" stroke="#bcbcbc" stroke-width="0.3" text-anchor="end" font-weight="normal" >10</text>
<text x="1480" y="194.9" font-size="11" fill="#bcbcbc" stroke="#bcbcbc" stroke-width="0.3" text-anchor="end" font-weight="normal" >8</text>
<text x="1480" y="222.7" font-size="11" fill="#bcbcbc" stroke="#bcbcbc" stroke-width="0.3" text-anchor="end" font-weight="normal" >6</text>
<text x="1480" y="250.5" font-size="11" fill="#bcbcbc" stroke="#bcbcbc" stroke-width="0.3" text-anchor="end" font-weight="normal" >4</text>
<text x="1480" y="278.3" font-size="11" fill="#bcbcbc" stroke="#bcbcbc" stroke-width="0.3" text-anchor="end" font-weight="normal" >2</text>
<text x="1480" y="306.1" font-size="11" fill="#bcbcbc" stroke="#bcbcbc" stroke-width="0.3" text-anchor="end" font-weight="normal" >0</text>
<line x1="1494" y1="302.2" x2="1494" y2="306.7" stroke="#3a3a3a" stroke-width="1.2"/>
<text x="1494" y="320.4" font-size="11" fill="#bcbcbc" stroke="#bcbcbc" stroke-width="0.3" text-anchor="middle" font-weight="normal" >09:51</text>
<text x="1494" y="331.7" font-size="11" fill="#bcbcbc" stroke="#bcbcbc" stroke-width="0.3" text-anchor="middle" font-weight="normal" >05–13</text>
<line x1="1545.84" y1="302.2" x2="1545.84" y2="306.7" stroke="#3a3a3a" stroke-width="1.2"/>
<text x="1545.84" y="320.4" font-size="11" fill="#bcbcbc" stroke="#bcbcbc" stroke-width="0.3" text-anchor="middle" font-weight="normal" >09:55</text>
<text x="1545.84" y="331.7" font-size="11" fill="#bcbcbc" stroke="#bcbcbc" stroke-width="0.3" text-anchor="middle" font-weight="normal" >05–13</text>
<line x1="1597.68" y1="302.2" x2="1597.68" y2="306.7" stroke="#3a3a3a" stroke-width="1.2"/>
<text x="1597.68" y="320.4" font-size="11" fill="#bcbcbc" stroke="#bcbcbc" stroke-width="0.3" text-anchor="middle" font-weight="normal" >09:59</text>
<text x="1597.68" y="331.7" font-size="11" fill="#bcbcbc" stroke="#bcbcbc" stroke-width="0.3" text-anchor="middle" font-weight="normal" >05–13</text>
<line x1="1649.52" y1="302.2" x2="1649.52" y2="306.7" stroke="#3a3a3a" stroke-width="1.2"/>
<text x="1649.52" y="320.4" font-size="11" fill="#bcbcbc" stroke="#bcbcbc" stroke-width="0.3" text-anchor="middle" font-weight="normal" >10:03</text>
<text x="1649.52" y="331.7" font-size="11" fill="#bcbcbc" stroke="#bcbcbc" stroke-width="0.3" text-anchor="middle" font-weight="normal" >05–13</text>
<line x1="1701.36" y1="302.2" x2="1701.36" y2="306.7" stroke="#3a3a3a" stroke-width="1.2"/>
<text x="1701.36" y="320.4" font-size="11" fill="#bcbcbc" stroke="#bcbcbc" stroke-width="0.3" text-anchor="middle" font-weight="normal" >10:07</text>
<text x="1701.36" y="331.7" font-size="11" fill="#bcbcbc" stroke="#bcbcbc" stroke-width="0.3" text-anchor="middle" font-weight="normal" >05–13</text>
<line x1="1753.2" y1="302.2" x2="1753.2" y2="306.7" stroke="#3a3a3a" stroke-width="1.2"/>
<text x="1753.2" y="320.4" font-size="11" fill="#bcbcbc" stroke="#bcbcbc" stroke-width="0.3" text-anchor="middle" font-weight="normal" >10:11</text>
<text x="1753.2" y="331.7" font-size="11" fill="#bcbcbc" stroke="#bcbcbc" stroke-width="0.3" text-anchor="middle" font-weight="normal" >05–13</text>
<line x1="1805.04" y1="302.2" x2="1805.04" y2="306.7" stroke="#3a3a3a" stroke-width="1.2"/>
<text x="1805.04" y="320.4" font-size="11" fill="#bcbcbc" stroke="#bcbcbc" stroke-width="0.3" text-anchor="middle" font-weight="normal" >10:15</text>
<text x="1805.04" y="331.7" font-size="11" fill="#bcbcbc" stroke="#bcbcbc" stroke-width="0.3" text-anchor="middle" font-weight="normal" >05–13</text>
<line x1="1856.88" y1="302.2" x2="1856.88" y2="306.7" stroke="#3a3a3a" stroke-width="1.2"/>
<text x="1856.88" y="320.4" font-size="11" fill="#bcbcbc" stroke="#bcbcbc" stroke-width="0.3" text-anchor="middle" font-weight="normal" >10:19</text>
<text x="1856.88" y="331.7" font-size="11" fill="#bcbcbc" stroke="#bcbcbc" stroke-width="0.3" text-anchor="middle" font-weight="normal" >05–13</text>
<polyline points="1494,302.2 1506.96,302.2 1519.92,302.2 1532.88,302.2 1545.84,302.2 1558.8,302.2 1571.76,302.2 1584.72,302.2 1597.68,302.2 1610.64,302.2 1623.6,302.2 1636.56,302.2 1649.52,302.2 1662.48,302.2 1675.44,302.2 1688.4,302.2 1701.36,302.2 1714.32,302.2 1727.28,302.2 1740.24,302.2 1753.2,302.2 1766.16,302.2 1779.12,302.2 1792.08,302.2 1805.04,302.2 1818,302.2 1830.96,302.2 1843.92,302.2 1856.88,302.2 1869.84,302.2 1882.8,302.2" fill="none" stroke="#3f9be6" stroke-width="1.8" stroke-linejoin="round"/>
<circle cx="1494" cy="302.2" r="1.4" fill="#3f9be6" stroke="#3f9be6" stroke-width="1"/>
<circle cx="1506.96" cy="302.2" r="1.4" fill="#3f9be6" stroke="#3f9be6" stroke-width="1"/>
<circle cx="1519.92" cy="302.2" r="1.4" fill="#3f9be6" stroke="#3f9be6" stroke-width="1"/>
<circle cx="1532.88" cy="302.2" r="1.4" fill="#3f9be6" stroke="#3f9be6" stroke-width="1"/>
<circle cx="1545.84" cy="302.2" r="1.4" fill="#3f9be6" stroke="#3f9be6" stroke-width="1"/>
<circle cx="1558.8" cy="302.2" r="1.4" fill="#3f9be6" stroke="#3f9be6" stroke-width="1"/>
<circle cx="1571.76" cy="302.2" r="1.4" fill="#3f9be6" stroke="#3f9be6" stroke-width="1"/>
<circle cx="1584.72" cy="302.2" r="1.4" fill="#3f9be6" stroke="#3f9be6" stroke-width="1"/>
<circle cx="1597.68" cy="302.2" r="1.4" fill="#3f9be6" stroke="#3f9be6" stroke-width="1"/>
<circle cx="1610.64" cy="302.2" r="1.4" fill="#3f9be6" stroke="#3f9be6" stroke-width="1"/>
<circle cx="1623.6" cy="302.2" r="1.4" fill="#3f9be6" stroke="#3f9be6" stroke-width="1"/>
<circle cx="1636.56" cy="302.2" r="1.4" fill="#3f9be6" stroke="#3f9be6" stroke-width="1"/>
<circle cx="1649.52" cy="302.2" r="1.4" fill="#3f9be6" stroke="#3f9be6" stroke-width="1"/>
<circle cx="1662.48" cy="302.2" r="1.4" fill="#3f9be6" stroke="#3f9be6" stroke-width="1"/>
<circle cx="1675.44" cy="302.2" r="1.4" fill="#3f9be6" stroke="#3f9be6" stroke-width="1"/>
<circle cx="1688.4" cy="302.2" r="1.4" fill="#3f9be6" stroke="#3f9be6" stroke-width="1"/>
<circle cx="1701.36" cy="302.2" r="1.4" fill="#3f9be6" stroke="#3f9be6" stroke-width="1"/>
<circle cx="1714.32" cy="302.2" r="1.4" fill="#3f9be6" stroke="#3f9be6" stroke-width="1"/>
<circle cx="1727.28" cy="302.2" r="1.4" fill="#3f9be6" stroke="#3f9be6" stroke-width="1"/>
<circle cx="1740.24" cy="302.2" r="1.4" fill="#3f9be6" stroke="#3f9be6" stroke-width="1"/>
<circle cx="1753.2" cy="302.2" r="1.4" fill="#3f9be6" stroke="#3f9be6" stroke-width="1"/>
<circle cx="1766.16" cy="302.2" r="1.4" fill="#3f9be6" stroke="#3f9be6" stroke-width="1"/>
<circle cx="1779.12" cy="302.2" r="1.4" fill="#3f9be6" stroke="#3f9be6" stroke-width="1"/>
<circle cx="1792.08" cy="302.2" r="1.4" fill="#3f9be6" stroke="#3f9be6" stroke-width="1"/>
<circle cx="1805.04" cy="302.2" r="1.4" fill="#3f9be6" stroke="#3f9be6" stroke-width="1"/>
<circle cx="1818" cy="302.2" r="1.4" fill="#3f9be6" stroke="#3f9be6" stroke-width="1"/>
<circle cx="1830.96" cy="302.2" r="1.4" fill="#3f9be6" stroke="#3f9be6" stroke-width="1"/>
<circle cx="1843.92" cy="302.2" r="1.4" fill="#3f9be6" stroke="#3f9be6" stroke-width="1"/>
<circle cx="1856.88" cy="302.2" r="1.4" fill="#3f9be6" stroke="#3f9be6" stroke-width="1"/>
<circle cx="1869.84" cy="302.2" r="1.4" fill="#3f9be6" stroke="#3f9be6" stroke-width="1"/>
<circle cx="1882.8" cy="302.2" r="1.4" fill="#3f9be6" stroke="#3f9be6" stroke-width="1"/>
<polyline points="1545.84,302.2 1558.8,302.2 1571.76,302.2 1623.6,302.2 1636.56,302.2 1649.52,302.2" fill="none" stroke="#45c4c4" stroke-width="1.8" stroke-linejoin="round"/>
<circle cx="1545.84" cy="302.2" r="1.4" fill="#45c4c4" stroke="#45c4c4" stroke-width="1"/>
<circle cx="1558.8" cy="302.2" r="1.4" fill="#45c4c4" stroke="#45c4c4" stroke-width="1"/>
<circle cx="1571.76" cy="302.2" r="1.4" fill="#45c4c4" stroke="#45c4c4" stroke-width="1"/>
<circle cx="1623.6" cy="302.2" r="1.4" fill="#45c4c4" stroke="#45c4c4" stroke-width="1"/>
<circle cx="1636.56" cy="302.2" r="1.4" fill="#45c4c4" stroke="#45c4c4" stroke-width="1"/>
<circle cx="1649.52" cy="302.2" r="1.4" fill="#45c4c4" stroke="#45c4c4" stroke-width="1"/>
<polyline points="1494,302.2 1506.96,302.2 1519.92,302.2 1532.88,302.2 1545.84,302.2 1558.8,163.2 1571.76,302.2 1584.72,302.2 1597.68,302.2 1610.64,302.2 1623.6,302.2 1636.56,163.2 1649.52,302.2 1662.48,302.2 1675.44,302.2 1688.4,302.2 1701.36,302.2 1714.32,302.2 1727.28,302.2 1740.24,302.2 1753.2,302.2 1766.16,302.2 1779.12,302.2 1792.08,302.2 1805.04,302.2 1818,302.2 1830.96,302.2 1843.92,302.2 1856.88,302.2 1869.84,302.2 1882.8,302.2" fill="none" stroke="#f4cfae" stroke-width="1.8" stroke-linejoin="round"/>
<circle cx="1494" cy="302.2" r="1.4" fill="#f4cfae" stroke="#f4cfae" stroke-width="1"/>
<circle cx="1506.96" cy="302.2" r="1.4" fill="#f4cfae" stroke="#f4cfae" stroke-width="1"/>
<circle cx="1519.92" cy="302.2" r="1.4" fill="#f4cfae" stroke="#f4cfae" stroke-width="1"/>
<circle cx="1532.88" cy="302.2" r="1.4" fill="#f4cfae" stroke="#f4cfae" stroke-width="1"/>
<circle cx="1545.84" cy="302.2" r="1.4" fill="#f4cfae" stroke="#f4cfae" stroke-width="1"/>
<circle cx="1558.8" cy="163.2" r="1.4" fill="#f4cfae" stroke="#f4cfae" stroke-width="1"/>
<circle cx="1571.76" cy="302.2" r="1.4" fill="#f4cfae" stroke="#f4cfae" stroke-width="1"/>
<circle cx="1584.72" cy="302.2" r="1.4" fill="#f4cfae" stroke="#f4cfae" stroke-width="1"/>
<circle cx="1597.68" cy="302.2" r="1.4" fill="#f4cfae" stroke="#f4cfae" stroke-width="1"/>
<circle cx="1610.64" cy="302.2" r="1.4" fill="#f4cfae" stroke="#f4cfae" stroke-width="1"/>
<circle cx="1623.6" cy="302.2" r="1.4" fill="#f4cfae" stroke="#f4cfae" stroke-width="1"/>
<circle cx="1636.56" cy="163.2" r="1.4" fill="#f4cfae" stroke="#f4cfae" stroke-width="1"/>
<circle cx="1649.52" cy="302.2" r="1.4" fill="#f4cfae" stroke="#f4cfae" stroke-width="1"/>
<circle cx="1662.48" cy="302.2" r="1.4" fill="#f4cfae" stroke="#f4cfae" stroke-width="1"/>
<circle cx="1675.44" cy="302.2" r="1.4" fill="#f4cfae" stroke="#f4cfae" stroke-width="1"/>
<circle cx="1688.4" cy="302.2" r="1.4" fill="#f4cfae" stroke="#f4cfae" stroke-width="1"/>
<circle cx="1701.36" cy="302.2" r="1.4" fill="#f4cfae" stroke="#f4cfae" stroke-width="1"/>
<circle cx="1714.32" cy="302.2" r="1.4" fill="#f4cfae" stroke="#f4cfae" stroke-width="1"/>
<circle cx="1727.28" cy="302.2" r="1.4" fill="#f4cfae" stroke="#f4cfae" stroke-width="1"/>
<circle cx="1740.24" cy="302.2" r="1.4" fill="#f4cfae" stroke="#f4cfae" stroke-width="1"/>
<circle cx="1753.2" cy="302.2" r="1.4" fill="#f4cfae" stroke="#f4cfae" stroke-width="1"/>
<circle cx="1766.16" cy="302.2" r="1.4" fill="#f4cfae" stroke="#f4cfae" stroke-width="1"/>
<circle cx="1779.12" cy="302.2" r="1.4" fill="#f4cfae" stroke="#f4cfae" stroke-width="1"/>
<circle cx="1792.08" cy="302.2" r="1.4" fill="#f4cfae" stroke="#f4cfae" stroke-width="1"/>
<circle cx="1805.04" cy="302.2" r="1.4" fill="#f4cfae" stroke="#f4cfae" stroke-width="1"/>
<circle cx="1818" cy="302.2" r="1.4" fill="#f4cfae" stroke="#f4cfae" stroke-width="1"/>
<circle cx="1830.96" cy="302.2" r="1.4" fill="#f4cfae" stroke="#f4cfae" stroke-width="1"/>
<circle cx="1843.92" cy="302.2" r="1.4" fill="#f4cfae" stroke="#f4cfae" stroke-width="1"/>
<circle cx="1856.88" cy="302.2" r="1.4" fill="#f4cfae" stroke="#f4cfae" stroke-width="1"/>
<circle cx="1869.84" cy="302.2" r="1.4" fill="#f4cfae" stroke="#f4cfae" stroke-width="1"/>
<circle cx="1882.8" cy="302.2" r="1.4" fill="#f4cfae" stroke="#f4cfae" stroke-width="1"/>
<circle cx="1479.8" cy="140.9" r="6" fill="#7ab8f5"/>
<text x="1491" y="145.3" font-size="12.6" fill="#ececec" stroke="#ececec" stroke-width="0.3">percentile=50</text>
<circle cx="1583" cy="140.9" r="6" fill="#a9a3e8"/>
<text x="1594" y="145.3" font-size="12.6" fill="#ececec" stroke="#ececec" stroke-width="0.3">percentile=75</text>
<circle cx="1686" cy="140.9" r="6" fill="#3f9be6"/>
<text x="1697" y="145.3" font-size="12.6" fill="#ececec" stroke="#ececec" stroke-width="0.3">percentile=90</text>
<circle cx="1790" cy="140.9" r="6" fill="#4fc4c4"/>
<text x="1800" y="145.3" font-size="12.6" fill="#ececec" stroke="#ececec" stroke-width="0.3">percentile=99</text>
<rect x="1826" y="128" width="60" height="22" fill="#222"/>
<path d="M1846.5 134.5 L1837 141 L1846.5 147.5 Z" fill="#b8b8b8"/>
<path d="M1861 135 L1870 141 L1861 147 Z" fill="#2e2e2e"/>
</svg>

<div class="badge" style="top:401.5px"></div><div class="bnum" style="top:405.9px">9</div>
<div class="sq" style="top:405.8px">select song0_.id as id1_0_, song0_.artist as artist2_0_, song0_.genre as genre3_0_, song0_.liked as liked4_0_, song0_.name as name5_0_ from song song0_ where song0_.liked&gt;?</div>
<div class="trk" style="top:423px"></div>
<div class="bar" style="top:423px;width:1794px"></div>
<div class="kebab" style="top:407px"></div>
<div class="badge" style="top:438.25px"></div><div class="bnum" style="top:442.65px">8</div>
<div class="sq" style="top:442.55px">select song0_.id as id1_0_, song0_.artist as artist2_0_, song0_.genre as genre3_0_, song0_.liked as liked4_0_, song0_.name as name5_0_ from song song0_ where song0_.liked&gt;?</div>
<div class="trk" style="top:459.75px"></div>
<div class="bar" style="top:459.75px;width:1594.67px"></div>
<div class="kebab" style="top:443.75px"></div>
<div class="badge" style="top:475px"></div><div class="bnum" style="top:479.4px">8</div>
<div class="sq" style="top:479.3px">select song0_.id as id1_0_, song0_.artist as artist2_0_, song0_.genre as genre3_0_, song0_.liked as liked4_0_, song0_.name as name5_0_ from song song0_</div>
<div class="trk" style="top:496.5px"></div>
<div class="bar" style="top:496.5px;width:1594.67px"></div>
<div class="kebab" style="top:480.5px"></div>
<div class="badge" style="top:511.75px"></div><div class="bnum" style="top:516.15px">7</div>
<div class="sq" style="top:516.05px">select song0_.id as id1_0_, song0_.artist as artist2_0_, song0_.genre as genre3_0_, song0_.liked as liked4_0_, song0_.name as name5_0_ from song song0_</div>
<div class="trk" style="top:533.25px"></div>
<div class="bar" style="top:533.25px;width:1395.33px"></div>
<div class="kebab" style="top:517.25px"></div>
<div class="badge" style="top:548.5px"></div><div class="bnum" style="top:552.9px">7</div>
<div class="sq" style="top:552.8px">select song0_.id as id1_0_, song0_.artist as artist2_0_, song0_.genre as genre3_0_, song0_.liked as liked4_0_, song0_.name as name5_0_ from song song0_</div>
<div class="trk" style="top:570px"></div>
<div class="bar" style="top:570px;width:1395.33px"></div>
<div class="kebab" style="top:554px"></div>
<div class="badge" style="top:585.25px"></div><div class="bnum" style="top:589.65px">6</div>
<div class="sq" style="top:589.55px">select song0_.id as id1_0_, song0_.artist as artist2_0_, song0_.genre as genre3_0_, song0_.liked as liked4_0_, song0_.name as name5_0_ from song song0_</div>
<div class="trk" style="top:606.75px"></div>
<div class="bar" style="top:606.75px;width:1196px"></div>
<div class="kebab" style="top:590.75px"></div>
<div class="badge" style="top:622px"></div><div class="bnum" style="top:626.4px">6</div>
<div class="sq" style="top:626.3px">select song0_.id as id1_0_, song0_.artist as artist2_0_, song0_.genre as genre3_0_, song0_.liked as liked4_0_, song0_.name as name5_0_ from song song0_ where song0_.liked&gt;?</div>
<div class="trk" style="top:643.5px"></div>
<div class="bar" style="top:643.5px;width:1196px"></div>
<div class="kebab" style="top:627.5px"></div>
<div class="kb2" style="left:510.5px"></div><div class="kb2" style="left:971.5px"></div><div class="kb2" style="left:1433.5px"></div>

</body></html>
